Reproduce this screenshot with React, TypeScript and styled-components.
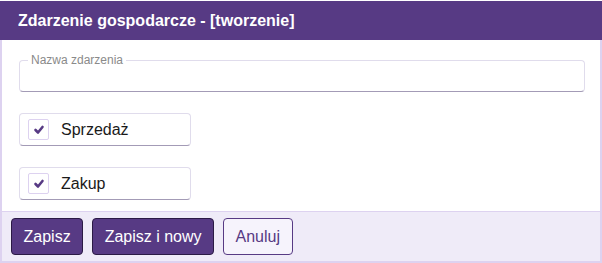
import React from 'react';
import styled, {createGlobalStyle} from 'styled-components';

const GlobalStyle = createGlobalStyle`
  html, body {
    margin: 0;
    padding: 0;
    background: #fff;
    font-family: 'Liberation Sans', Arial, sans-serif;
  }
`;

const Dialog = styled.div`
  width: 602px;
  height: 263px;
  box-sizing: border-box;
  padding-top: 1px;
  display: flex;
  flex-direction: column;
`;

const Header = styled.div`
  height: 39px;
  background: #573a84;
  color: #fff;
  display: flex;
  align-items: center;
  padding: 0 18px;
  font-size: 16px;
  font-weight: bold;
`;

const Body = styled.div`
  flex: 1;
  border-left: 2px solid #ddd2f0;
  border-right: 2px solid #ddd2f0;
  padding: 13px 15px 9px 17px;
  display: flex;
  flex-direction: column;
`;

const Field = styled.fieldset`
  margin: 0;
  padding: 0 10px;
  height: 39px;
  box-sizing: border-box;
  border: 1px solid #e0dcec;
  border-bottom-color: #a39bb6;
  border-radius: 4px;
`;

const Legend = styled.legend`
  font-size: 12px;
  color: #8a8a8a;
  padding: 0 3px;
  margin-left: -2px;
`;

const CheckRow = styled.label`
  margin-top: 21px;
  width: 172px;
  height: 33px;
  box-sizing: border-box;
  border: 1px solid #e0dcec;
  border-bottom-color: #a39bb6;
  border-radius: 4px;
  display: flex;
  align-items: center;
  padding-left: 8px;
  gap: 12px;
  font-size: 16px;
  color: #1a1a1a;
`;

const Box = styled.span`
  width: 21px;
  height: 21px;
  box-sizing: border-box;
  border: 1px solid #ddd2f0;
  border-radius: 2px;
  display: flex;
  align-items: center;
  justify-content: center;
`;

const Footer = styled.div`
  height: 52px;
  box-sizing: border-box;
  background: #efebf8;
  border: 2px solid #ddd2f0;
  border-top-width: 1px;
  display: flex;
  align-items: center;
  gap: 9px;
  padding: 0 9px;
`;

const Button = styled.button<{$secondary?: boolean}>`
  height: 37px;
  box-sizing: border-box;
  padding: 0 11.5px;
  border-radius: 4px;
  font-family: 'Liberation Sans', Arial, sans-serif;
  font-size: 16px;
  border: 1px solid ${p => (p.$secondary ? '#573a84' : '#2b1a45')};
  background: ${p => (p.$secondary ? '#f6f3fc' : '#573a84')};
  color: ${p => (p.$secondary ? '#573a84' : '#fff')};
`;

const Check = () => (
    <Box>
        <svg width="12" height="10" viewBox="0 0 12 10">
            <path d="M2.5 5 L5 7.5 L9.5 2" fill="none" stroke="#573a84" strokeWidth="2.6" strokeLinecap="round" strokeLinejoin="round"/>
        </svg>
    </Box>
);

const App = () => {
    return (
        <>
            <GlobalStyle/>
            <Dialog>
                <Header>Zdarzenie gospodarcze - [tworzenie]</Header>
                <Body>
                    <Field>
                        <Legend>Nazwa zdarzenia</Legend>
                    </Field>
                    <CheckRow>
                        <Check/>
                        Sprzedaż
                    </CheckRow>
                    <CheckRow>
                        <Check/>
                        Zakup
                    </CheckRow>
                </Body>
                <Footer>
                    <Button>Zapisz</Button>
                    <Button>Zapisz i nowy</Button>
                    <Button $secondary>Anuluj</Button>
                </Footer>
            </Dialog>
        </>
    );
};

export default App;
